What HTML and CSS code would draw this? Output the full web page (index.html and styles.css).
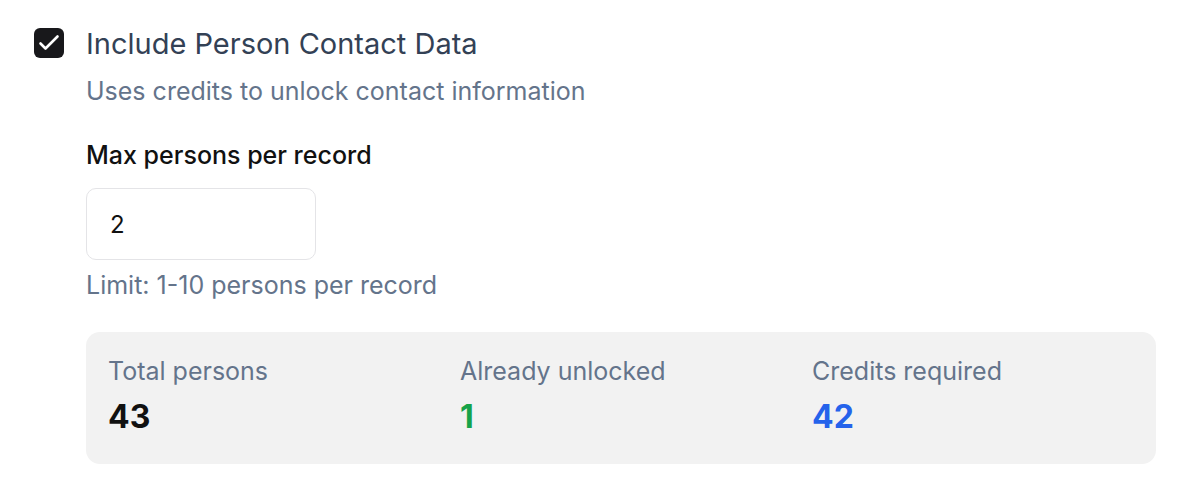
FILE: index.html
```html
<!DOCTYPE html>
<html lang="en">

<head>
    <meta charset="UTF-8">
    <meta name="viewport" content="width=device-width, initial-scale=1.0">
    <link rel="stylesheet" href="styles.css">
</head>

<body>
    <div class="option">
        <label class="check" for="includeContacts">
            <input type="checkbox" id="includeContacts" checked>
            <span class="box">
                <svg viewBox="0 0 30 30" width="30" height="30">
                    <path d="M6.5 15.5l5 5L23.5 8.5" fill="none" stroke="#fff" stroke-width="2.6"
                        stroke-linecap="round" stroke-linejoin="round" />
                </svg>
            </span>
        </label>

        <div class="content">
            <div class="title">Include Person Contact Data</div>
            <div class="hint">Uses credits to unlock contact information</div>

            <label class="field-label" for="maxPersons">Max persons per record</label>
            <input class="field" type="number" id="maxPersons" min="1" max="10" value="2">
            <div class="limit">Limit: 1-10 persons per record</div>

            <div class="stats">
                <div class="stat">
                    <div class="stat-label">Total persons</div>
                    <div class="stat-value">43</div>
                </div>
                <div class="stat">
                    <div class="stat-label">Already unlocked</div>
                    <div class="stat-value green">1</div>
                </div>
                <div class="stat">
                    <div class="stat-label">Credits required</div>
                    <div class="stat-value blue">42</div>
                </div>
            </div>
        </div>
    </div>
</body>

</html>
```

FILE: styles.css
```css
body {
    margin: 0;
    background: #fff;
    font-family: Inter, "Noto Sans", sans-serif;
}

.option {
    display: flex;
    gap: 22px;
    padding: 28px 30px 0 34px;
}

.check input {
    display: none;
}

.check .box {
    display: block;
    width: 30px;
    height: 30px;
    border-radius: 6px;
    background: #18181b;
}

.check .box svg {
    display: block;
}

.content {
    flex: 1;
    display: flex;
    flex-direction: column;
    align-items: flex-start;
}

.title {
    font-size: 29px;
    line-height: 32px;
    color: #334155;
}

.hint {
    margin-top: 15px;
    font-size: 25px;
    line-height: 32px;
    color: #64748b;
}

.field-label {
    margin-top: 32px;
    font-size: 25px;
    line-height: 32px;
    font-weight: 500;
    color: #111;
}

.field {
    box-sizing: border-box;
    margin-top: 17px;
    width: 230px;
    height: 72px;
    padding: 0 23px;
    border: 1px solid #e4e4e7;
    border-radius: 10px;
    font-family: inherit;
    font-size: 24px;
    color: #111;
    outline: none;
    -moz-appearance: textfield;
}

.field::-webkit-inner-spin-button,
.field::-webkit-outer-spin-button {
    -webkit-appearance: none;
    margin: 0;
}

.limit {
    margin-top: 9px;
    font-size: 25px;
    line-height: 32px;
    color: #64748b;
}

.stats {
    box-sizing: border-box;
    align-self: stretch;
    margin-top: 31px;
    padding: 23px 22px 27px;
    display: grid;
    grid-template-columns: repeat(3, 1fr);
    gap: 30px;
    border-radius: 14px;
    background: #f2f2f2;
}

.stat-label {
    font-size: 25px;
    line-height: 32px;
    color: #64748b;
}

.stat-value {
    margin-top: 10px;
    font-size: 32px;
    line-height: 40px;
    font-weight: 700;
    color: #111;
}

.stat-value.green {
    color: #16a34a;
}

.stat-value.blue {
    color: #2563eb;
}
```
